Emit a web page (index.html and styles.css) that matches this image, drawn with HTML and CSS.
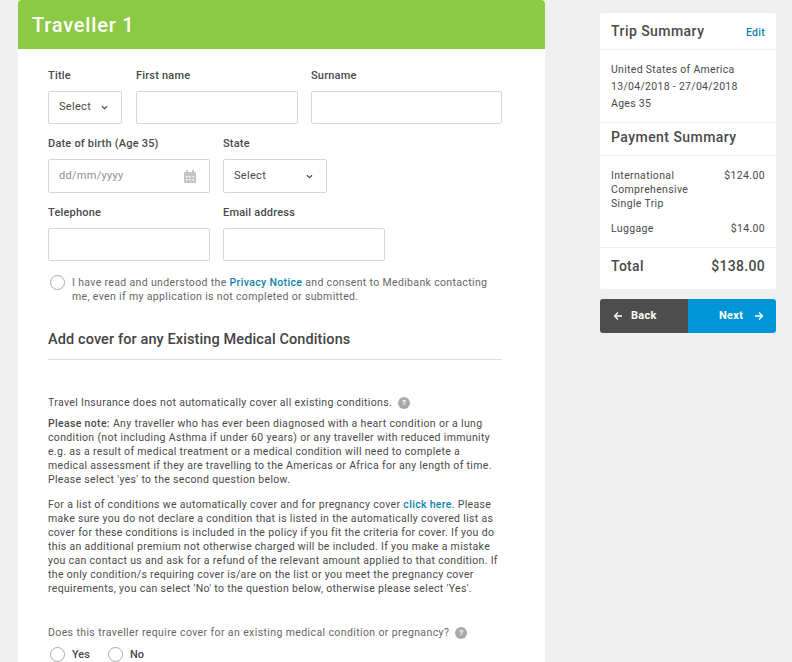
FILE: index.html
```html
<!DOCTYPE html>
<html lang="en">
<head>
  <meta charset="UTF-8">
  <title>Traveller details</title>
  <link rel="stylesheet" href="styles.css">
</head>
<body>
  <main class="traveller">
    <h1 class="traveller-title">Traveller 1</h1>
    <form class="traveller-form">
      <div class="field-row">
        <div class="field field-title">
          <label>Title</label>
          <div class="control select"><span>Select</span>
            <svg class="chevron" viewBox="0 0 8 6"><path d="M1 1.500l3 3 3-3" /></svg>
          </div>
        </div>
        <div class="field field-first">
          <label>First name</label>
          <div class="control"></div>
        </div>
        <div class="field field-surname">
          <label>Surname</label>
          <div class="control"></div>
        </div>
      </div>

      <div class="field-row">
        <div class="field field-wide">
          <label>Date of birth (Age 35)</label>
          <div class="control control-tall date"><span>dd/mm/yyyy</span>
            <svg class="calendar" viewBox="0 0 12 13">
              <path d="M0 2h2V0h2v2h4V0h2v2h2v11H0z" fill="#c4c4c4" />
              <path d="M2 6h1.500v1.500H2zM5.200 6h1.500v1.500H5.200zM8.500 6H10v1.500H8.500zM2 9h1.500v1.500H2zM5.200 9h1.500v1.500H5.200zM8.500 9H10v1.500H8.500z" fill="#fff" />
            </svg>
          </div>
        </div>
        <div class="field field-state">
          <label>State</label>
          <div class="control control-tall select"><span>Select</span>
            <svg class="chevron" viewBox="0 0 8 6"><path d="M1 1.500l3 3 3-3" /></svg>
          </div>
        </div>
      </div>

      <div class="field-row">
        <div class="field field-wide">
          <label>Telephone</label>
          <div class="control"></div>
        </div>
        <div class="field field-wide">
          <label>Email address</label>
          <div class="control"></div>
        </div>
      </div>

      <div class="consent">
        <span class="radio"></span>
        <p>I have read and understood the <a href="#">Privacy Notice</a> and consent to Medibank contacting<br>me, even if my application is not completed or submitted.</p>
      </div>

      <h2 class="section-title">Add cover for any Existing Medical Conditions</h2>

      <p class="intro">Travel Insurance does not automatically cover all existing conditions. <span class="help">?</span></p>
      <p class="note"><strong>Please note:</strong> Any traveller who has ever been diagnosed with a heart condition or a lung<br>condition (not including Asthma if under 60 years) or any traveller with reduced immunity<br>e.g. as a result of medical treatment or a medical condition will need to complete a<br>medical assessment if they are travelling to the Americas or Africa for any length of time.<br>Please select 'yes' to the second question below.</p>
      <p class="note">For a list of conditions we automatically cover and for pregnancy cover <a href="#">click here</a>. Please<br>make sure you do not declare a condition that is listed in the automatically covered list as<br>cover for these conditions is included in the policy if you fit the criteria for cover. If you do<br>this an additional premium not otherwise charged will be included. If you make a mistake<br>you can contact us and ask for a refund of the relevant amount applied to that condition. If<br>the only condition/s requiring cover is/are on the list or you meet the pregnancy cover<br>requirements, you can select 'No' to the question below, otherwise please select 'Yes'.</p>

      <p class="question">Does this traveller require cover for an existing medical condition or pregnancy? <span class="help">?</span></p>
      <div class="answers">
        <span class="radio"></span><span class="answer">Yes</span>
        <span class="radio"></span><span class="answer">No</span>
      </div>
    </form>
  </main>

  <aside class="sidebar">
    <section class="summary">
      <div class="summary-head">
        <h3>Trip Summary</h3>
        <a href="#">Edit</a>
      </div>
      <div class="trip-details">
        <p>United States of America</p>
        <p>13/04/2018 - 27/04/2018</p>
        <p>Ages 35</p>
      </div>
      <div class="payment-head"><h3>Payment Summary</h3></div>
      <div class="payment-lines">
        <div class="line"><span>International<br>Comprehensive<br>Single Trip</span><span>$124.00</span></div>
        <div class="line"><span>Luggage</span><span>$14.00</span></div>
      </div>
      <div class="total"><span>Total</span><span>$138.00</span></div>
    </section>
    <div class="actions">
      <a class="btn btn-back" href="#">
        <svg viewBox="0 0 10 10"><path d="M9 5H1.500M5 1.500L1.500 5 5 8.500" /></svg>
        Back
      </a>
      <a class="btn btn-next" href="#">
        Next
        <svg viewBox="0 0 10 10"><path d="M1 5h7.500M5 1.500L8.500 5 5 8.500" /></svg>
      </a>
    </div>
  </aside>
</body>
</html>
```

FILE: styles.css
```css
/* Global */
html, body { height: 100%; }
body {
  margin: 0;
  height: 662px;
  overflow: hidden;
  display: flex;
  align-items: flex-start;
  background: #f0f0f0;
  font-family: "Roboto", "Liberation Sans", sans-serif;
  color: #4a4a4a;
}
p, h1, h2, h3 { margin: 0; }
a { color: #0f7fb0; text-decoration: none; font-weight: 500; }

/* Traveller card */
.traveller {
  width: 527px;
  margin-left: 18px;
  background: #fff;
  border-radius: 4px 4px 0 0;
  flex-shrink: 0;
}
.traveller-title {
  height: 49px;
  padding-left: 14px;
  line-height: 50px;
  background: #8cc944;
  color: #fff;
  font-size: 20px;
  font-weight: 500;
  letter-spacing: 0.8px;
  border-radius: 4px 4px 0 0;
}
.traveller-form { padding: 19px 43px 0 30px; }

/* Fields */
.field-row { display: flex; gap: 13px; margin-bottom: 12px; }
.field label {
  display: block;
  height: 14px;
  margin-bottom: 9px;
  font-size: 11px;
  line-height: 16px;
  font-weight: 500;
  letter-spacing: 0.2px;
}
.field-title { width: 74px; margin-right: 1px; }
.field-first { width: 162px; }
.field-surname { width: 191px; }
.field-wide { width: 162px; }
.field-state { width: 104px; }
.control {
  box-sizing: border-box;
  height: 33px;
  padding: 0 13px 0 10px;
  display: flex;
  align-items: center;
  justify-content: space-between;
  background: #fff;
  border: 1px solid #d6d6d6;
  border-radius: 2px;
  font-size: 11px;
  letter-spacing: 0.3px;
}
.control-tall { height: 34px; }
.control span { margin-top: -2px; }
.date { color: #8f8f8f; }
.chevron { width: 7px; height: 5px; fill: none; stroke: #4a4a4a; stroke-width: 1.300; }
.calendar { width: 12px; height: 13px; }

/* Radios */
.radio {
  box-sizing: border-box;
  display: block;
  width: 15px;
  height: 15px;
  background: #fff;
  border: 1px solid #a9a9a9;
  border-radius: 50%;
  flex-shrink: 0;
}
.consent {
  display: flex;
  gap: 7px;
  padding-left: 2px;
  margin-top: 15px;
  font-size: 10.500px;
  line-height: 14px;
  letter-spacing: 0.35px;
  color: #666;
}
.consent .radio { margin-top: -1px; }

/* Existing conditions */
.section-title {
  margin-top: 27px;
  padding-bottom: 10px;
  border-bottom: 1px solid #dcdcdc;
  font-size: 14.500px;
  line-height: 18px;
  font-weight: 500;
  letter-spacing: 0.11px;
  color: #444;
}
.intro, .note, .question {
  font-size: 10.500px;
  line-height: 14px;
  letter-spacing: 0.33px;
}
.intro { margin-top: 36px; letter-spacing: 0.34px; }
.note { margin-top: 7px; white-space: nowrap; }
.note + .note { margin-top: 11px; }
.note strong { font-weight: 500; }
.question { margin-top: 30px; color: #666; letter-spacing: 0.39px; }
.help {
  display: inline-block;
  width: 12px;
  height: 12px;
  margin-left: 3px;
  border-radius: 50%;
  background: #a9a9a9;
  color: #fff;
  font-size: 8px;
  line-height: 12px;
  text-align: center;
  font-weight: 700;
  vertical-align: 1px;
  letter-spacing: 0;
}
.answers {
  display: flex;
  align-items: center;
  margin-top: 7px;
  padding-left: 2px;
  font-size: 11px;
  font-weight: 500;
}
.answer { margin-left: 7px; margin-right: 18px; }

/* Sidebar */
.sidebar { width: 176px; margin: 13px 0 0 55px; flex-shrink: 0; }
.summary { background: #fff; border-radius: 2px; }
.summary h3 { font-size: 14px; font-weight: 500; letter-spacing: 0.45px; color: #4a4a4a; }
.summary-head {
  display: flex;
  justify-content: space-between;
  align-items: center;
  height: 36px;
  padding: 0 11px;
  border-bottom: 1px solid #efefef;
}
.summary-head a { font-size: 10.500px; letter-spacing: 0.3px; padding-top: 2px; }
.trip-details {
  padding: 11px 11px 10px;
  font-size: 10.500px;
  line-height: 17px;
  letter-spacing: 0.3px;
  border-bottom: 1px solid #efefef;
}
.payment-head {
  height: 32px;
  padding: 0 11px;
  line-height: 28px;
  border-bottom: 1px solid #efefef;
}
.payment-lines { padding: 13px 11px 11px; font-size: 10.500px; line-height: 14px; letter-spacing: 0.35px; border-bottom: 1px solid #efefef; }
.line { display: flex; justify-content: space-between; }
.line + .line { margin-top: 11px; }
.total {
  box-sizing: border-box;
  display: flex;
  justify-content: space-between;
  align-items: center;
  height: 41px;
  padding: 0 11px 6px;
  font-size: 14px;
  font-weight: 500;
  letter-spacing: 0.3px;
}
.actions { display: flex; margin-top: 10px; }
.btn {
  box-sizing: border-box;
  display: flex;
  align-items: center;
  width: 88px;
  height: 34px;
  padding-bottom: 1px;
  color: #fff;
  font-size: 11px;
  font-weight: 700;
  letter-spacing: 0.3px;
}
.btn svg { width: 10px; height: 10px; fill: none; stroke: #fff; stroke-width: 1.300; }
.btn-back { background: #4d4d4d; padding-left: 13px; gap: 8px; border-radius: 3px 0 0 3px; }
.btn-next { background: #0095d6; padding-left: 31px; gap: 11px; border-radius: 0 3px 3px 0; }
```
